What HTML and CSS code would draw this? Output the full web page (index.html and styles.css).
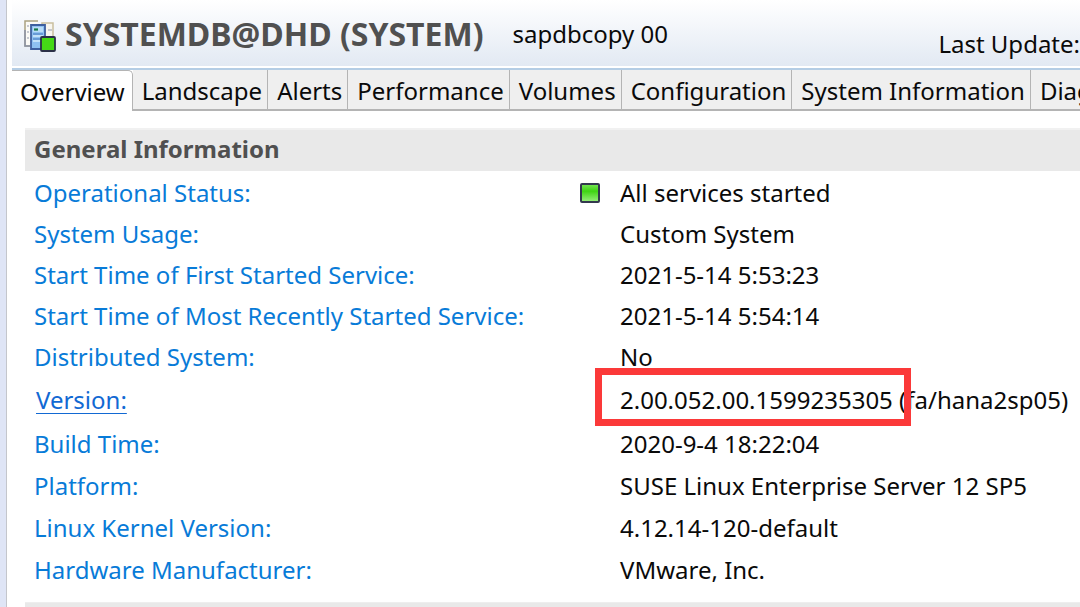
FILE: index.html
```html
<!DOCTYPE html>
<html lang="en">
<head>
<meta charset="utf-8">
<meta name="viewport" content="width=device-width, initial-scale=1">
<title>SYSTEMDB@DHD (SYSTEM)</title>
<link rel="stylesheet" href="styles.css">
</head>
<body>
<main class="editor">
  <header class="header">
    <svg class="system-icon" viewBox="0 0 32 32" aria-hidden="true">
      <path d="M14 1H1v25h5" fill="#fbfaf6" stroke="#aaa180" stroke-width="1.5"/>
      <path d="M1 10v16h5" fill="none" stroke="#8a93a8" stroke-width="1.5"/>
      <path d="M18 3h11v14H18z" fill="#f8f6ef" stroke="#c9bf9f" stroke-width="1.5"/>
      <path d="M3 6h2M3 12h2M3 18h2M24 10h4" stroke="#b5b9c4" stroke-width="1.5"/>
      <path d="M7 5h14v24H7z" fill="#8fc1f1" stroke="#3e5f9f" stroke-width="1.8"/>
      <path d="M9 7h10v5H9z" fill="#b9dcf8"/>
      <path d="M9 14h10M9 19h10" stroke="#5c8fce" stroke-width="1.5"/>
      <path d="M9 16h10M9 21h8" stroke="#d5ebfc" stroke-width="1.5"/>
      <path d="M10 9.500h4" stroke="#167a4b" stroke-width="2.200"/>
      <rect x="17" y="17" width="14" height="14" rx="1" fill="#45d916" stroke="#2b3047" stroke-width="1.800"/>
    </svg>
    <h1 class="title">SYSTEMDB@DHD (SYSTEM)</h1>
    <span class="host">sapdbcopy 00</span>
    <span class="updated">Last Update:</span>
  </header>
  <nav class="tabs" role="tablist">
    <button class="tab tab-active" type="button" role="tab" aria-selected="true">Overview</button>
    <button class="tab" type="button" role="tab">Landscape</button>
    <button class="tab" type="button" role="tab">Alerts</button>
    <button class="tab" type="button" role="tab">Performance</button>
    <button class="tab" type="button" role="tab">Volumes</button>
    <button class="tab" type="button" role="tab">Configuration</button>
    <button class="tab" type="button" role="tab">System Information</button>
    <button class="tab" type="button" role="tab">Diagnosis</button>
  </nav>
  <section class="section">
    <h2 class="section-title">General Information</h2>
    <dl class="facts">
      <dt>Operational Status:</dt>
      <dd class="status"><svg class="status-icon" viewBox="0 0 20 20" aria-hidden="true"><defs><linearGradient id="lamp" x1="0" y1="0" x2="0" y2="1"><stop offset="0" stop-color="#7be65a"/><stop offset=".4" stop-color="#3fd413"/><stop offset="1" stop-color="#9cef80"/></linearGradient></defs><rect x="1" y="1" width="18" height="18" rx="1" fill="url(#lamp)" stroke="#33384e" stroke-width="2"/></svg>All services started</dd>
      <dt>System Usage:</dt><dd>Custom System</dd>
      <dt>Start Time of First Started Service:</dt><dd>2021-5-14 5:53:23</dd>
      <dt>Start Time of Most Recently Started Service:</dt><dd>2021-5-14 5:54:14</dd>
      <dt>Distributed System:</dt><dd>No</dd>
      <dt><a class="link" href="#version">Version:</a></dt>
      <dd id="version"><span class="marked">2.00.052.00.1599235305</span> (fa/hana2sp05)</dd>
      <dt>Build Time:</dt><dd>2020-9-4 18:22:04</dd>
      <dt>Platform:</dt><dd>SUSE Linux Enterprise Server 12 SP5</dd>
      <dt>Linux Kernel Version:</dt><dd>4.12.14-120-default</dd>
      <dt>Hardware Manufacturer:</dt><dd>VMware, Inc.</dd>
    </dl>
  </section>
  <div class="next-section"></div>
</main>
</body>
</html>
```
FILE: styles.css
```css
* {
  box-sizing: border-box;
}

body {
  margin: 0;
  overflow: hidden;
  background: #fff;
  color: #0a0a0a;
  font: 24px/32px "Segoe UI", "Noto Sans", "Open Sans", sans-serif;
}

.editor {
  min-height: 100vh;
  padding-left: 6px;
  border-left: 6px solid #dfe5f6;
  box-shadow: inset 1px 0 #c4c6cc;
}

.header {
  display: flex;
  align-items: center;
  height: 70px;
  padding-left: 12px;
  border-bottom: 2px solid #b4cde5;
  background: linear-gradient(#fff, #e2e9f3 66px, #fff 66px);
  white-space: nowrap;
}

.system-icon {
  flex: none;
  width: 32px;
  height: 32px;
  margin-top: 4px;
}

.title {
  margin: 0 0 0 9px;
  color: #505050;
  font-size: 32px;
  line-height: 40px;
}

.host {
  margin-left: 29px;
}

.updated {
  margin: 20px 0 0 auto;
}

.tabs {
  display: flex;
  height: 41px;
  overflow: hidden;
}

.tab {
  flex: none;
  padding: 2px 5px 0 9px;
  border: solid #b4b4b4;
  border-width: 0 1px 2px 0;
  background: #efefef;
  color: inherit;
  font: inherit;
}

.tab-active {
  padding: 2px 7px 0 8px;
  border-width: 1px 1px 0 0;
  border-top-right-radius: 5px;
  background: #fff;
}

.section {
  padding: 17px 0 0 13px;
}

.section-title {
  margin: 0;
  padding: 3px 9px 6px;
  border-top: 2px solid #f1f1f1;
  background: #e9e9e9;
  color: #505050;
  font-size: 24px;
  line-height: 32px;
}

.facts {
  display: grid;
  grid-template-columns: 586px 1fr;
  grid-template-rows: repeat(5, 41px) 46px;
  grid-auto-rows: 42px;
  align-items: center;
  margin: 0;
  padding: 1px 0 0 9px;
  white-space: nowrap;
}

.facts dt {
  color: #087bd8;
}

.facts dd {
  margin: 0;
}

.link {
  margin-left: 2px;
  color: #1269d3;
  text-decoration-thickness: 1px;
  text-underline-offset: 4px;
}

.status {
  position: relative;
}

.status-icon {
  position: absolute;
  top: 6px;
  left: -40px;
  width: 20px;
  height: 20px;
}

.marked {
  position: relative;
}

.marked::after {
  content: "";
  position: absolute;
  inset: -15px -18px -10px -25px;
  border: 7px solid #fb3939;
}

.next-section {
  height: 8px;
  margin: 11px 0 0 13px;
  border-top: 1px solid #eee;
  background: #e9e9e9;
}
```
